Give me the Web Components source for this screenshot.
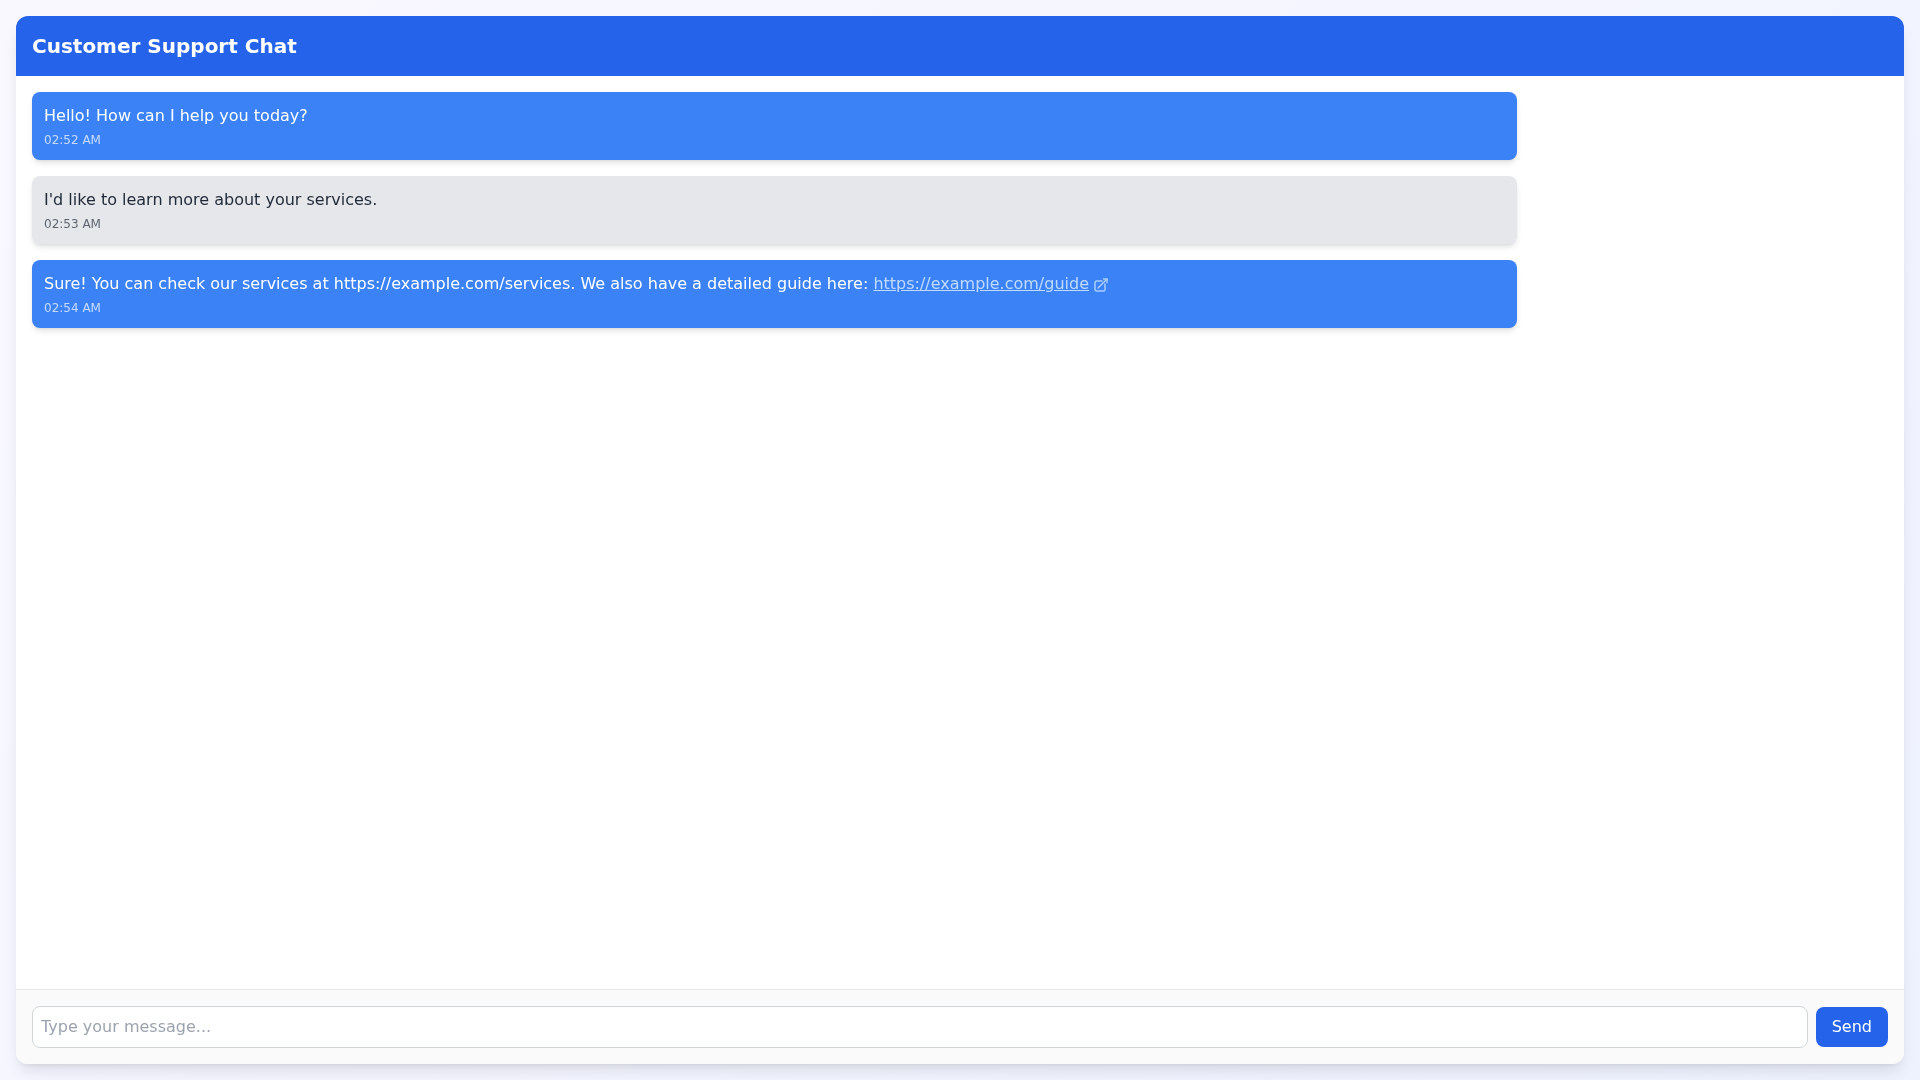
<!DOCTYPE html>
<html lang="en">
<head>
<meta charset="utf-8">
<title>Customer Support Chat</title>
<style>
  html, body { height: 100%; }
  body {
    margin: 0;
    font-family: "DejaVu Sans", sans-serif;
    background: linear-gradient(135deg, #f9f8ff 0%, #eef2ff 100%);
  }
</style>
</head>
<body>
<chat-window>
  <span slot="title">Customer Support Chat</span>
  <chat-message time="02:52 AM">Hello! How can I help you today?</chat-message>
  <chat-message variant="gray" time="02:53 AM">I'd like to learn more about your services.</chat-message>
  <chat-message time="02:54 AM">Sure! You can check our services at https://example.com/services. We also have a detailed guide here: <chat-link href="https://example.com/guide">https://example.com/guide</chat-link></chat-message>
</chat-window>

<script>
class ChatWindow extends HTMLElement {
  constructor() {
    super();
    this.attachShadow({ mode: "open" });
    this.shadowRoot.innerHTML = `
      <style>
        :host { display: block; box-sizing: border-box; height: 100vh; padding: 16px; }
        .card {
          display: flex; flex-direction: column; height: 100%;
          background: #fff; border-radius: 12px; overflow: hidden;
          box-shadow: 0 10px 15px -3px rgba(0,0,0,.1), 0 4px 6px -4px rgba(0,0,0,.1);
          will-change: transform;
        }
        header {
          background: #2563eb; color: #fff; padding: 16px;
          font-size: 20px; line-height: 28px; font-weight: 700;
        }
        .messages {
          flex: 1; min-height: 0; padding: 16px;
          display: flex; flex-direction: column; gap: 16px;
        }
      </style>
      <div class="card">
        <header><slot name="title"></slot></header>
        <div class="messages"><slot></slot></div>
        <chat-input></chat-input>
      </div>
    `;
  }
}

class ChatMessage extends HTMLElement {
  constructor() {
    super();
    this.attachShadow({ mode: "open" });
    this.shadowRoot.innerHTML = `
      <style>
        :host {
          display: block; box-sizing: border-box; max-width: 80%;
          padding: 12px; border-radius: 8px;
          font-size: 16px; line-height: 24px;
          background: #3b82f6; color: #fff;
          box-shadow: 0 4px 6px -1px rgba(0,0,0,.1), 0 2px 4px -2px rgba(0,0,0,.1);
        }
        :host([variant="gray"]) { background: #e5e7eb; color: #1f2937; }
        .time { margin-top: 4px; font-size: 12px; line-height: 16px; opacity: .7; }
      </style>
      <div><slot></slot></div>
      <div class="time"></div>
    `;
    this.shadowRoot.querySelector(".time").textContent = this.getAttribute("time");
  }
}

class ChatLink extends HTMLElement {
  constructor() {
    super();
    this.attachShadow({ mode: "open" });
    this.shadowRoot.innerHTML = `
      <style>
        :host { display: inline; }
        a { color: #bfdbfe; text-decoration: underline; }
        svg { display: inline-block; width: 16px; height: 16px; margin-left: 4px; vertical-align: -4px; opacity: .85; }
      </style>
      <a><slot></slot></a><svg viewBox="0 0 24 24" fill="none" stroke="#bfdbfe" stroke-width="2.25" stroke-linecap="round" stroke-linejoin="round"><path d="M13.5 6H5.25A2.25 2.25 0 0 0 3 8.25v10.5A2.25 2.25 0 0 0 5.25 21h10.5A2.25 2.25 0 0 0 18 18.75V10.5"/><path d="M7.5 16.5 21 3"/><path d="M15.75 3H21v5.25"/></svg>
    `;
    this.shadowRoot.querySelector("a").href = this.getAttribute("href");
  }
}

class ChatInput extends HTMLElement {
  constructor() {
    super();
    this.attachShadow({ mode: "open" });
    this.shadowRoot.innerHTML = `
      <style>
        :host {
          display: flex; align-items: center; gap: 8px; padding: 16px;
          background: #fafafa; border-top: 1px solid #e5e7eb;
        }
        input {
          flex: 1; min-width: 0; box-sizing: border-box; margin: 0; padding: 8px;
          font: 16px/24px "DejaVu Sans", sans-serif; color: #1f2937;
          background: #fff; border: 1px solid #d1d5db; border-radius: 8px; outline: none;
        }
        input::placeholder { color: #9ca3af; }
        button {
          margin: 0; padding: 8px 16px; border: none; border-radius: 8px;
          font: 16px/24px "DejaVu Sans", sans-serif;
          background: #2563eb; color: #fff; cursor: pointer;
        }
      </style>
      <input type="text" placeholder="Type your message...">
      <button type="button">Send</button>
    `;
  }
}

customElements.define("chat-window", ChatWindow);
customElements.define("chat-message", ChatMessage);
customElements.define("chat-link", ChatLink);
customElements.define("chat-input", ChatInput);
</script>
</body>
</html>
